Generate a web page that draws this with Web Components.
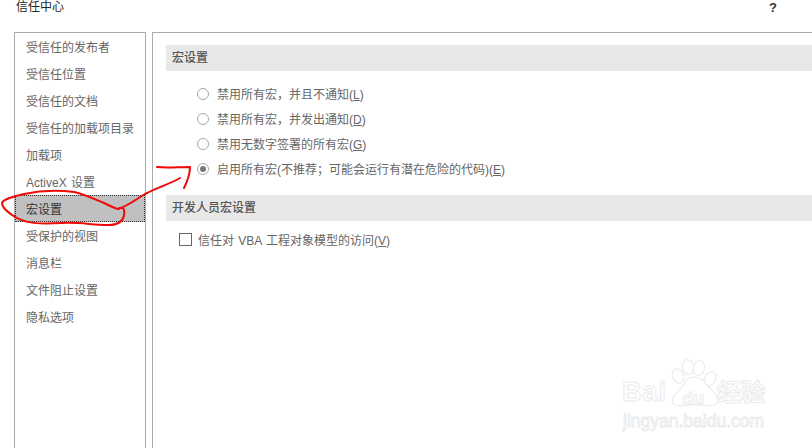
<!DOCTYPE html>
<html lang="zh">
<head>
<meta charset="utf-8">
<title>信任中心</title>
<style>
    html, body { margin: 0; height: 100%; background: #fff; overflow: hidden; }
    body { font-family: "Liberation Sans", "Noto Sans CJK SC", sans-serif; font-size: 12px; }
</style>
</head>
<body>
<trust-dialog>
    <trust-nav slot="nav">
        <nav-item>受信任的发布者</nav-item>
        <nav-item>受信任位置</nav-item>
        <nav-item>受信任的文档</nav-item>
        <nav-item>受信任的加载项目录</nav-item>
        <nav-item>加载项</nav-item>
        <nav-item>ActiveX 设置</nav-item>
        <nav-item selected>宏设置</nav-item>
        <nav-item>受保护的视图</nav-item>
        <nav-item>消息栏</nav-item>
        <nav-item>文件阻止设置</nav-item>
        <nav-item>隐私选项</nav-item>
    </trust-nav>
    <section-head>宏设置</section-head>
    <option-group>
        <radio-option>禁用所有宏，并且不通知(<u>L</u>)</radio-option>
        <radio-option>禁用所有宏，并发出通知(<u>D</u>)</radio-option>
        <radio-option>禁用无数字签署的所有宏(<u>G</u>)</radio-option>
        <radio-option checked>启用所有宏(不推荐；可能会运行有潜在危险的代码)(<u>E</u>)</radio-option>
    </option-group>
    <section-head>开发人员宏设置</section-head>
    <check-option>信任对 VBA 工程对象模型的访问(<u>V</u>)</check-option>
</trust-dialog>
<pen-marks></pen-marks>
<baidu-mark></baidu-mark>

<script>
const FONT = '"Liberation Sans", "Noto Sans CJK SC", sans-serif';

class TrustDialog extends HTMLElement {
    constructor() {
        super();
        this.attachShadow({ mode: 'open' });
        this.shadowRoot.innerHTML = `
            <style>
                :host { display: flex; flex-direction: column; height: 448px; font-family: ${FONT}; font-size: 12px; color: #666; word-spacing: 1px; }
                header { height: 32px; flex: none; display: flex; justify-content: space-between; padding: 0 35px 0 16px; color: #262626; line-height: 15px; box-sizing: border-box; }
                .help { font-size: 13px; font-weight: 700; color: #333; }
                .body { flex: 1; display: flex; gap: 6px; padding-left: 14px; min-height: 0; }
                main { flex: 1; border: solid #ababab; border-width: 1px 0 0 1px; padding: 12px 0 0 13px; }
            </style>
            <header><span>信任中心</span><span class="help">?</span></header>
            <div class="body">
                <slot name="nav"></slot>
                <main><slot></slot></main>
            </div>
        `;
    }
}

class TrustNav extends HTMLElement {
    constructor() {
        super();
        this.attachShadow({ mode: 'open' });
        this.shadowRoot.innerHTML = `
            <style>
                :host { display: flex; flex-direction: column; width: 130px; flex: none; border: solid #ababab; border-width: 1px 1px 0 1px; }
            </style>
            <slot></slot>
        `;
    }
}

class NavItem extends HTMLElement {
    constructor() {
        super();
        this.attachShadow({ mode: 'open' });
        this.shadowRoot.innerHTML = `
            <style>
                :host { display: flex; align-items: center; height: 27px; padding-left: 11px; box-sizing: border-box; white-space: nowrap; position: relative; }
                :host([selected]) { background: #c0c0c0; color: #333; outline: 1px dotted #333; outline-offset: -1px; }
            </style>
            <slot></slot>
        `;
    }
}

class SectionHead extends HTMLElement {
    constructor() {
        super();
        this.attachShadow({ mode: 'open' });
        this.shadowRoot.innerHTML = `
            <style>
                :host { display: flex; align-items: center; height: 26px; box-sizing: border-box; padding: 0 0 3px 6px; background: #e8e8e8; color: #555; font-weight: 500; }
            </style>
            <slot></slot>
        `;
    }
}

class OptionGroup extends HTMLElement {
    constructor() {
        super();
        this.attachShadow({ mode: 'open' });
        this.shadowRoot.innerHTML = `
            <style>
                :host { display: flex; flex-direction: column; padding: 10px 0 14px 31px; }
            </style>
            <slot></slot>
        `;
    }
}

class RadioOption extends HTMLElement {
    constructor() {
        super();
        this.attachShadow({ mode: 'open' });
        this.shadowRoot.innerHTML = `
            <style>
                :host { display: flex; align-items: center; gap: 8px; height: 25px; white-space: nowrap; }
                .dot { width: 10px; height: 10px; border: 1px solid #a8a8a8; border-radius: 50%; display: flex; align-items: center; justify-content: center; flex: none; }
                :host([checked]) .dot::after { content: ''; width: 6px; height: 6px; border-radius: 50%; background: #777; }
            </style>
            <span class="dot"></span><span><slot></slot></span>
        `;
    }
}

class CheckOption extends HTMLElement {
    constructor() {
        super();
        this.attachShadow({ mode: 'open' });
        this.shadowRoot.innerHTML = `
            <style>
                :host { display: flex; align-items: center; gap: 6px; height: 25px; margin: 6px 0 0 13px; white-space: nowrap; }
                .box { width: 11px; height: 11px; border: 1px solid #666; flex: none; }
            </style>
            <span class="box"></span><span><slot></slot></span>
        `;
    }
}

// Red pen annotation drawn on top of the dialog
class PenMarks extends HTMLElement {
    constructor() {
        super();
        this.attachShadow({ mode: 'open' });
        this.shadowRoot.innerHTML = `
            <style>
                :host { position: absolute; left: 0; top: 0; width: 812px; height: 448px; pointer-events: none; }
                svg { display: block; }
                path { fill: none; stroke: #f00808; stroke-width: 2; stroke-linecap: round; stroke-linejoin: round; }
            </style>
            <svg width="812" height="448" viewBox="0 0 812 448">
                <path d="M74 192 C58 190 38 191 24 194 C12 197 3 199 2 203 C2 208 10 214 17 218 C28 224 42 224 62 223 C80 222 92 225 108 225 C118 225 123 222 124 215 C125 209 123 206 118 209"/>
                <path d="M74 192 C84 194 94 199 104 203 C110 206 114 208 118 209 C128 206 135 200 145 194 C158 187 170 184 180 178"/>
                <path d="M157 167 C166 168 178 167 190 167 C190 176 187 182 184 188"/>
            </svg>
        `;
    }
}

// Faint outlined site watermark in the bottom right corner
class BaiduMark extends HTMLElement {
    constructor() {
        super();
        this.attachShadow({ mode: 'open' });
        this.shadowRoot.innerHTML = `
            <style>
                :host { position: absolute; left: 620px; top: 355px; width: 170px; height: 80px; pointer-events: none; font-family: "Liberation Sans", "Noto Sans CJK SC", sans-serif; word-spacing: 0; }
                span { position: absolute; color: #fff; -webkit-text-stroke: 1px #ebebeb; white-space: nowrap; line-height: 1; font-weight: 700; }
                .bai { left: 2px; top: 24px; font-size: 27px; letter-spacing: 1px; }
                .du { left: 62px; top: 35px; font-size: 18px; }
                .jy { left: 97px; top: 26px; font-size: 24px; }
                .url { left: 3px; top: 58px; font-size: 17.5px; font-weight: 400; }
                svg { position: absolute; left: 0; top: 0; }
                ellipse, path { fill: #fff; stroke: #ebebeb; stroke-width: 1.2; }
            </style>
            <svg width="170" height="80" viewBox="0 0 170 80">
                <ellipse cx="58" cy="21" rx="5.5" ry="7.5" transform="rotate(-25 58 21)"/>
                <ellipse cx="68" cy="12" rx="5.5" ry="7.5" transform="rotate(-8 68 12)"/>
                <ellipse cx="79" cy="13" rx="5.5" ry="7.5" transform="rotate(10 79 13)"/>
                <ellipse cx="90" cy="24" rx="5.5" ry="7.5" transform="rotate(30 90 24)"/>
                <path d="M74 22 C66 22 65 29 60 34 C55 39 51 43 53 48 C55 52 63 51 68 50 C74 49 79 49 85 50 C91 51 97 51 98 46 C99 41 93 37 89 32 C85 27 82 22 74 22 Z"/>
            </svg>
            <span class="bai">Bai</span><span class="du">du</span><span class="jy">经验</span>
            <span class="url">jingyan.baidu.com</span>
        `;
    }
}

customElements.define('trust-dialog', TrustDialog);
customElements.define('trust-nav', TrustNav);
customElements.define('nav-item', NavItem);
customElements.define('section-head', SectionHead);
customElements.define('option-group', OptionGroup);
customElements.define('radio-option', RadioOption);
customElements.define('check-option', CheckOption);
customElements.define('pen-marks', PenMarks);
customElements.define('baidu-mark', BaiduMark);
</script>
</body>
</html>
